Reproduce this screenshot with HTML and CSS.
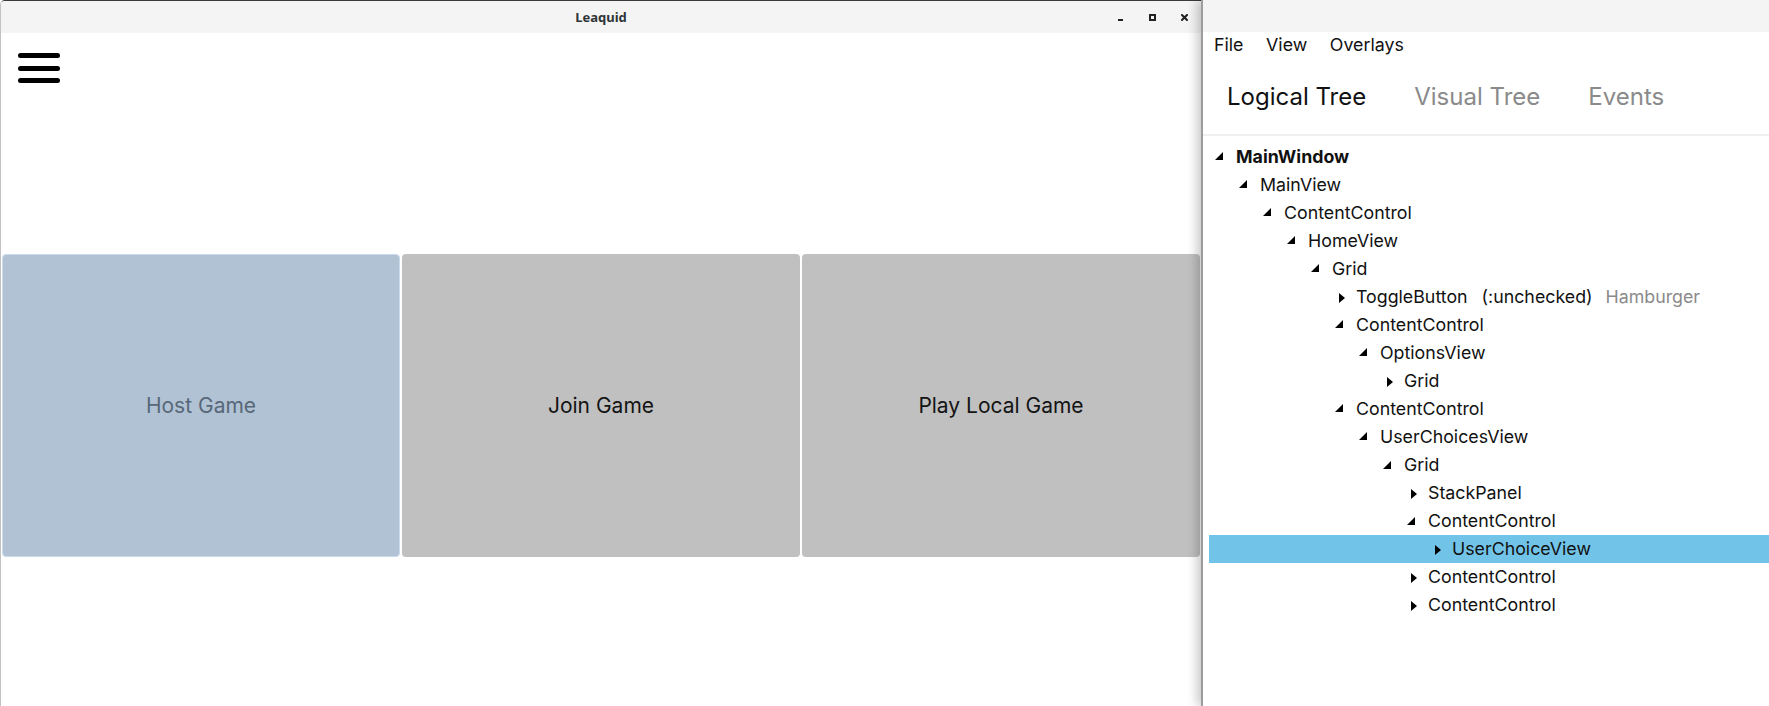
FILE: index.html
```html
<!DOCTYPE html>
<html>
<head>
<meta charset="utf-8">
<title>Leaquid</title>
<link rel="stylesheet" href="styles.css">
</head>
<body>
<div class="desktop">
  <section class="app-window">
    <header class="titlebar">
      <div class="tb-side"></div>
      <div class="tb-title">Leaquid</div>
      <div class="tb-side tb-controls">
        <span class="ctl"><span class="ctl-min"></span></span>
        <span class="ctl"><span class="ctl-max"></span></span>
        <span class="ctl"><svg width="7" height="7" viewBox="0 0 7 7"><path d="M1 1L6 6M6 1L1 6" stroke="#222" stroke-width="2" stroke-linecap="square"/></svg></span>
      </div>
    </header>
    <div class="app-content">
      <div class="hamburger">
        <span class="bar"></span>
        <span class="bar"></span>
        <span class="bar"></span>
      </div>
      <div class="choices">
        <div class="choice choice-host">Host Game</div>
        <div class="choice">Join Game</div>
        <div class="choice">Play Local Game</div>
      </div>
    </div>
  </section>

  <section class="devtools">
    <header class="dt-titlebar"></header>
    <nav class="menu">
      <span class="menu-item">File</span>
      <span class="menu-item">View</span>
      <span class="menu-item">Overlays</span>
    </nav>
    <div class="tabs">
      <span class="tab active">Logical Tree</span>
      <span class="tab">Visual Tree</span>
      <span class="tab">Events</span>
    </div>
    <div class="tree">
      <div class="row l0"><span class="tg"><svg class="exp" width="8" height="8" viewBox="0 0 8 8"><path d="M8 0V8H0Z"/></svg></span><span class="name bold">MainWindow</span></div>
      <div class="row l1"><span class="tg"><svg class="exp" width="8" height="8" viewBox="0 0 8 8"><path d="M8 0V8H0Z"/></svg></span><span class="name">MainView</span></div>
      <div class="row l2"><span class="tg"><svg class="exp" width="8" height="8" viewBox="0 0 8 8"><path d="M8 0V8H0Z"/></svg></span><span class="name">ContentControl</span></div>
      <div class="row l3"><span class="tg"><svg class="exp" width="8" height="8" viewBox="0 0 8 8"><path d="M8 0V8H0Z"/></svg></span><span class="name">HomeView</span></div>
      <div class="row l4"><span class="tg"><svg class="exp" width="8" height="8" viewBox="0 0 8 8"><path d="M8 0V8H0Z"/></svg></span><span class="name">Grid</span></div>
      <div class="row l5"><span class="tg"><svg class="col" width="6" height="10" viewBox="0 0 6 10"><path d="M0 0L6 5L0 10Z"/></svg></span><span class="name">ToggleButton</span><span class="cls">(:unchecked)</span><span class="nm">Hamburger</span></div>
      <div class="row l5"><span class="tg"><svg class="exp" width="8" height="8" viewBox="0 0 8 8"><path d="M8 0V8H0Z"/></svg></span><span class="name">ContentControl</span></div>
      <div class="row l6"><span class="tg"><svg class="exp" width="8" height="8" viewBox="0 0 8 8"><path d="M8 0V8H0Z"/></svg></span><span class="name">OptionsView</span></div>
      <div class="row l7"><span class="tg"><svg class="col" width="6" height="10" viewBox="0 0 6 10"><path d="M0 0L6 5L0 10Z"/></svg></span><span class="name">Grid</span></div>
      <div class="row l5"><span class="tg"><svg class="exp" width="8" height="8" viewBox="0 0 8 8"><path d="M8 0V8H0Z"/></svg></span><span class="name">ContentControl</span></div>
      <div class="row l6"><span class="tg"><svg class="exp" width="8" height="8" viewBox="0 0 8 8"><path d="M8 0V8H0Z"/></svg></span><span class="name">UserChoicesView</span></div>
      <div class="row l7"><span class="tg"><svg class="exp" width="8" height="8" viewBox="0 0 8 8"><path d="M8 0V8H0Z"/></svg></span><span class="name">Grid</span></div>
      <div class="row l8"><span class="tg"><svg class="col" width="6" height="10" viewBox="0 0 6 10"><path d="M0 0L6 5L0 10Z"/></svg></span><span class="name">StackPanel</span></div>
      <div class="row l8"><span class="tg"><svg class="exp" width="8" height="8" viewBox="0 0 8 8"><path d="M8 0V8H0Z"/></svg></span><span class="name">ContentControl</span></div>
      <div class="row l9 selected"><span class="tg"><svg class="col" width="6" height="10" viewBox="0 0 6 10"><path d="M0 0L6 5L0 10Z"/></svg></span><span class="name">UserChoiceView</span></div>
      <div class="row l8"><span class="tg"><svg class="col" width="6" height="10" viewBox="0 0 6 10"><path d="M0 0L6 5L0 10Z"/></svg></span><span class="name">ContentControl</span></div>
      <div class="row l8"><span class="tg"><svg class="col" width="6" height="10" viewBox="0 0 6 10"><path d="M0 0L6 5L0 10Z"/></svg></span><span class="name">ContentControl</span></div>
    </div>
  </section>
</div>
</body>
</html>
```

FILE: styles.css
```css
* { box-sizing: border-box; }

html, body {
  margin: 0;
  padding: 0;
  width: 1769px;
  height: 706px;
  overflow: hidden;
  background: #ffffff;
}

.desktop {
  display: flex;
  width: 1769px;
  height: 706px;
}

/* ---------- application window ---------- */
.app-window {
  width: 1201px;
  flex: none;
  height: 706px;
  display: flex;
  flex-direction: column;
  background: #ffffff;
  border-left: 1px solid #c2c2c2;
  border-top: 1px solid #3a3a3a;
  border-top-left-radius: 5px;
  overflow: hidden;
}

.titlebar {
  height: 32px;
  flex: none;
  background: #f4f4f4;
  display: grid;
  grid-template-columns: 1fr auto 1fr;
  align-items: center;
}

.tb-title {
  font-family: "Noto Sans", "DejaVu Sans", sans-serif;
  font-weight: 700;
  font-size: 13px;
  color: #2e3436;
}

.tb-controls {
  display: flex;
  justify-content: flex-end;
  align-items: center;
  gap: 18px;
  padding-right: 10px;
}

.ctl {
  width: 14px;
  height: 14px;
  display: flex;
  align-items: center;
  justify-content: center;
}

.ctl-min {
  width: 5px;
  height: 2px;
  background: #222;
  margin-top: 6px;
}

.ctl-max {
  width: 7px;
  height: 7px;
  border: 2px solid #222;
}

.app-content {
  flex: 1;
  display: flex;
  flex-direction: column;
}

.hamburger {
  margin: 20px 0 0 17px;
  width: 42px;
  display: flex;
  flex-direction: column;
  gap: 7.5px;
}

.bar {
  display: block;
  height: 5px;
  border-radius: 3px;
  background: #000;
}

.choices {
  margin-top: 170px;
  height: 305px;
  display: grid;
  grid-template-columns: repeat(3, 1fr);
}

.choice {
  margin: 1px;
  border-radius: 4px;
  background: #c0c0c0;
  display: flex;
  align-items: center;
  justify-content: center;
  font-family: Inter, "Noto Sans", sans-serif;
  font-size: 21px;
  color: #141414;
}

.choice-host {
  background: #b0c2d4;
  border: 1px solid #cbdbeb;
  color: #586878;
}

/* ---------- devtools window ---------- */
.devtools {
  flex: 1;
  position: relative;
  z-index: 1;
  background: #ffffff;
  border-left: 2px solid #9c9c9c;
  box-shadow: -4px 0 10px rgba(0, 0, 0, 0.22);
  display: flex;
  flex-direction: column;
  font-family: Inter, "Noto Sans", sans-serif;
  color: #111;
}

.dt-titlebar {
  height: 32px;
  flex: none;
  background: #f4f4f4;
}

.menu {
  height: 24px;
  display: flex;
  align-items: center;
  font-size: 17.8px;
}

.menu-item {
  padding: 0 11.3px;
}

.menu-item:first-child {
  padding-left: 11px;
}

.tabs {
  height: 80px;
  padding-top: 2px;
  display: flex;
  align-items: center;
  border-bottom: 2px solid #efefef;
}

.tab {
  padding: 0 24px;
  font-size: 24px;
  color: #8a8a8a;
}

.tab.active {
  color: #111;
}

.tree {
  padding: 6px 0 0 6px;
}

.row {
  height: 28.05px;
  display: flex;
  align-items: center;
  font-size: 17.8px;
  white-space: nowrap;
}

.row.selected {
  background: #71c4e8;
}

.l0 { padding-left: 3px; }
.l1 { padding-left: 27px; }
.l2 { padding-left: 51px; }
.l3 { padding-left: 75px; }
.l4 { padding-left: 99px; }
.l5 { padding-left: 123px; }
.l6 { padding-left: 147px; }
.l7 { padding-left: 171px; }
.l8 { padding-left: 195px; }
.l9 { padding-left: 219px; }

.tg {
  width: 24px;
  flex: none;
  display: flex;
  align-items: center;
}

.tg svg { display: block; fill: #000; }
.tg .exp { margin-left: 3px; }
.tg .col { margin-left: 7px; margin-top: 3px; }

.name.bold { font-weight: 700; }

.cls { margin-left: 14px; }

.nm {
  margin-left: 13px;
  color: #8a8a8a;
}
```
